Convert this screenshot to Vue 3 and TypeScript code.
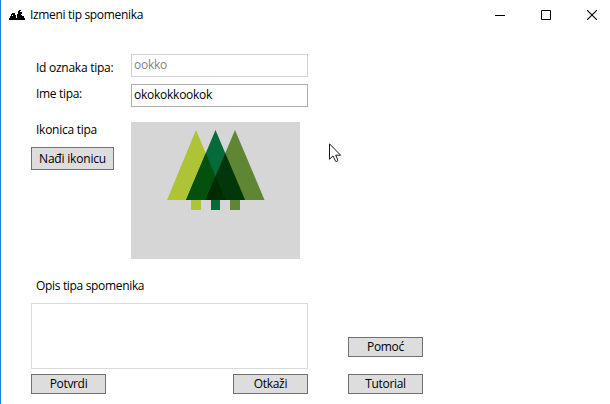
<script setup lang="ts">
import { ref } from 'vue'

const id = ref('ookko')
const name = ref('okokokkookok')
const description = ref('')
</script>

<template>
  <div class="window">
    <header class="titlebar">
      <svg class="app-icon" width="16" height="10" viewBox="0 0 16 10" shape-rendering="crispEdges">
        <path d="M0 10V8H1V6H2V4H3V3H6V5H7V8H8V4H9V1H10V0H12V2H13V6H15V8H16V10Z" fill="#000" />
        <path d="M3 5h1v1h-1zM12 4h1v1h-1zM11 1h1v1h-1z" fill="#fff" />
      </svg>
      <h1 class="title">Izmeni tip spomenika</h1>
      <div class="controls">
        <svg width="10" height="10" viewBox="0 0 10 10"><path d="M0 5.5H10" stroke="#000" /></svg>
        <svg width="10" height="10" viewBox="0 0 10 10"><path d="M.5 .5H9.5V9.5H.5Z" fill="none" stroke="#000" /></svg>
        <svg width="10" height="10" viewBox="0 0 10 10"><path d="M0 0L10 10M10 0L0 10" stroke="#000" stroke-width="1.1" /></svg>
      </div>
    </header>

    <main class="content">
      <form class="form" @submit.prevent>
        <div class="row row-id">
          <label class="label wide" for="type-id">Id oznaka tipa:</label>
          <input id="type-id" v-model="id" class="input" disabled />
        </div>
        <div class="row row-name">
          <label class="label" for="type-name">Ime tipa:</label>
          <input id="type-name" v-model="name" class="input" />
        </div>
        <div class="row row-icon">
          <div class="picker">
            <span class="label wide">Ikonica tipa</span>
            <button type="button" class="button find">Nađi ikonicu</button>
          </div>
          <div class="preview">
            <svg width="169" height="137" viewBox="0 0 169 137">
              <path d="M60 77h10v11h-10z" fill="#afc336" />
              <path d="M80 77h9v11h-9z" fill="#066a3a" />
              <path d="M99 77h10v11h-10z" fill="#5f8733" />
              <path d="M65 8L94.5 78H36Z" fill="#afc336" />
              <path d="M104 8L133.500 78H74.500Z" fill="#5f8733" />
              <path d="M84.500 8L114 78H55Z" fill="#066a3a" />
              <path d="M74.750 31.200L94.500 78H55Z" fill="#04500c" />
              <path d="M94.250 31.200L114 78H74.500Z" fill="#03360b" />
              <path d="M84.500 54.500L94.500 78H74.500Z" fill="#022a03" />
            </svg>
          </div>
        </div>
        <label class="label description-label" for="description">Opis tipa spomenika</label>
        <textarea id="description" v-model="description" class="description"></textarea>
        <div class="actions">
          <button class="button">Potvrdi</button>
          <button type="button" class="button">Otkaži</button>
        </div>
      </form>
      <aside class="help">
        <button type="button" class="button">Pomoć</button>
        <button type="button" class="button">Tutorial</button>
      </aside>
    </main>

    <svg class="pointer" width="13" height="20" viewBox="0 0 13 20">
      <path d="M.5 .8V16.200L4 12.900L6.600 18.300Q8 19 9 17.400L6.700 12.200H11.600Z" fill="#fff" stroke="#181820" />
    </svg>
  </div>
</template>

<style>
body {
  margin: 0;
  background: #fff;
}
</style>

<style scoped>
.window {
  position: relative;
  box-sizing: border-box;
  width: 610px;
  height: 404px;
  overflow: hidden;
  border-left: 1px solid #1883d7;
  background: #fff;
  color: #000;
  font: 12px/16px "Open Sans", "Noto Sans", sans-serif;
}
.titlebar {
  display: flex;
  align-items: center;
  height: 29px;
  padding-left: 8px;
}
.app-icon {
  margin-right: 5px;
}
.title {
  margin: 1px 0 0;
  font: inherit;
  white-space: nowrap;
  letter-spacing: -0.33px;
}
.controls {
  display: flex;
  gap: 36px;
  margin-left: auto;
  padding-right: 13px;
}
.content {
  display: flex;
  gap: 40px;
  padding: 25px 0 0 30px;
}
.form {
  display: flex;
  flex-direction: column;
  width: 277px;
}
.row {
  display: grid;
  grid-template-columns: 100px 1fr;
}
.label {
  padding-left: 5px;
  white-space: nowrap;
  letter-spacing: -0.33px;
}
.wide {
  letter-spacing: -0.26px;
}
.row-id .label {
  padding-top: 6px;
}
.row-name {
  margin-top: 7px;
}
.row-name .label {
  padding-top: 2px;
}
.input {
  box-sizing: border-box;
  width: 177px;
  height: 23px;
  margin: 0;
  padding: 0 2px 3px;
  border: 1px solid #abadb3;
  border-radius: 0;
  outline: 0;
  background: #fff;
  color: #000;
  font: inherit;
  letter-spacing: -0.25px;
}
.input:disabled {
  border-color: #cfd0d2;
  color: #838383;
}
.row-icon {
  margin-top: 15px;
}
.picker {
  display: flex;
  flex-direction: column;
  align-items: flex-start;
  gap: 9px;
}
.preview {
  width: 169px;
  height: 137px;
  background: #d6d6d6;
}
.preview svg {
  display: block;
}
.description-label {
  margin-top: 19px;
}
.description {
  box-sizing: border-box;
  width: 277px;
  height: 66px;
  margin: 9px 0 0;
  padding: 2px;
  border: 1px solid #dadada;
  border-radius: 0;
  outline: 0;
  resize: none;
  background: #fff;
  font: inherit;
}
.actions {
  display: flex;
  justify-content: space-between;
  margin-top: 5px;
}
.help {
  display: flex;
  flex-direction: column;
  justify-content: flex-end;
  gap: 17px;
}
.button {
  display: flex;
  align-items: center;
  justify-content: center;
  box-sizing: border-box;
  width: 75px;
  height: 20px;
  padding: 0;
  border: 1px solid #707070;
  border-radius: 0;
  background: #ddd;
  color: #000;
  font: inherit;
  white-space: nowrap;
  letter-spacing: -0.33px;
}
.find {
  width: 83px;
  height: 23px;
  letter-spacing: -0.2px;
}
.pointer {
  position: absolute;
  left: 328px;
  top: 143px;
}
</style>
